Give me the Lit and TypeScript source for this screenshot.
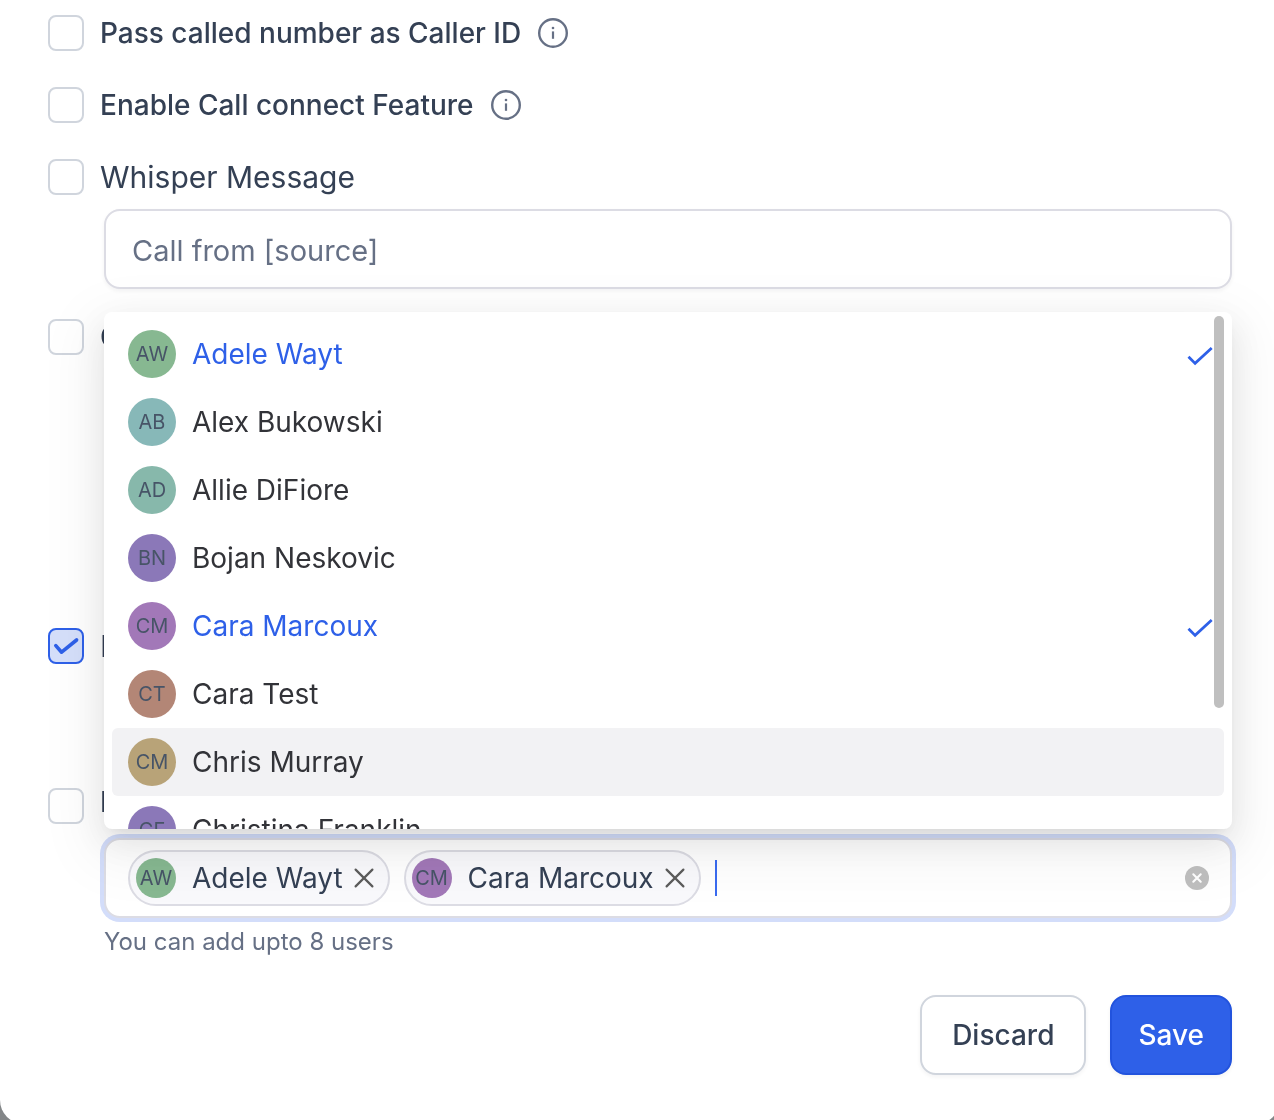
import { LitElement, html, css, svg, nothing } from "lit";
import { customElement, property, state } from "lit/decorators.js";
import { classMap } from "lit/directives/class-map.js";
import { styleMap } from "lit/directives/style-map.js";

interface User {
  id: string;
  name: string;
  initials: string;
  color: string;
}

const USERS: User[] = [
  { id: "adele", name: "Adele Wayt", initials: "AW", color: "#87b891" },
  { id: "alex", name: "Alex Bukowski", initials: "AB", color: "#87b8b8" },
  { id: "allie", name: "Allie DiFiore", initials: "AD", color: "#87b8ab" },
  { id: "bojan", name: "Bojan Neskovic", initials: "BN", color: "#8b78b8" },
  { id: "cara-m", name: "Cara Marcoux", initials: "CM", color: "#a278b8" },
  { id: "cara-t", name: "Cara Test", initials: "CT", color: "#b38676" },
  { id: "chris", name: "Chris Murray", initials: "CM", color: "#b8a378" },
  { id: "christina", name: "Christina Franklin", initials: "CF", color: "#8b78b8" },
];

const infoIcon = svg`<svg class="info" viewBox="0 0 32 32" fill="none" stroke="#667085" aria-hidden="true">
  <circle cx="16" cy="16" r="13.8" stroke-width="2.4"/>
  <path d="M16 14.4v7.4" stroke-width="2.2"/>
  <circle cx="16" cy="11" r="1.3" fill="#667085" stroke="none"/>
</svg>`;

const checkIcon = svg`<svg class="check" viewBox="0 -4 26 24" fill="none" stroke="#2e60e8" stroke-width="2.8" aria-hidden="true">
  <path d="M1.5 10.8l6.6 6.6L24.7 2"/>
</svg>`;

@customElement("check-row")
export class CheckRow extends LitElement {
  @property() label = "";
  @property({ type: Boolean }) checked = false;
  @property({ type: Boolean }) regular = false;
  @property({ type: Boolean }) top = false;
  @property({ type: Boolean }) info = false;

  static styles = css`
    :host {
      display: flex;
      align-items: center;
      height: 36px;
    }
    .row {
      display: flex;
      align-items: center;
      gap: 16px;
      font: 500 28px/36px Inter, "Liberation Sans", sans-serif;
      color: #344054;
      white-space: nowrap;
    }
    .regular {
      font-size: 30px;
      font-weight: 400;
    }
    .top {
      align-items: flex-start;
      line-height: 28px;
    }
    .box {
      display: grid;
      width: 36px;
      height: 36px;
    }
    .box > * {
      grid-area: 1 / 1;
    }
    input {
      appearance: none;
      box-sizing: border-box;
      width: 36px;
      height: 36px;
      margin: 0;
      border: 2px solid #d0d5dd;
      border-radius: 8px;
      background: #ffffff;
    }
    input:checked {
      border-color: #2e60e8;
      background: #d5dffa;
    }
    .mark {
      width: 36px;
      height: 36px;
      pointer-events: none;
    }
    .info-button {
      display: flex;
      margin: 0 0 0 16px;
      padding: 0;
      border: 0;
      background: none;
    }
    .info {
      display: block;
      width: 32px;
      height: 32px;
    }
  `;

  render() {
    return html`
      <label class=${classMap({ row: true, regular: this.regular, top: this.top })}>
        <span class="box">
          <input
            type="checkbox"
            .checked=${this.checked}
            @change=${(e: Event) => (this.checked = (e.target as HTMLInputElement).checked)}
          />
          ${this.checked
            ? svg`<svg class="mark" viewBox="0 0 36 36" fill="none" stroke="#2e60e8" stroke-width="3.6" stroke-linecap="round" stroke-linejoin="round" aria-hidden="true">
                <path d="M7.8 17.6l5.8 6.6L28.6 12"/>
              </svg>`
            : nothing}
        </span>
        <span>${this.label}</span>
      </label>
      ${this.info
        ? html`<button class="info-button" type="button" aria-label="More about ${this.label}">${infoIcon}</button>`
        : nothing}
    `;
  }
}

@customElement("user-avatar")
export class UserAvatar extends LitElement {
  @property() initials = "";
  @property() color = "";
  @property({ type: Boolean, reflect: true }) small = false;

  static styles = css`
    :host {
      display: block;
      flex: none;
    }
    .avatar {
      display: flex;
      align-items: center;
      justify-content: center;
      width: 48px;
      height: 48px;
      border-radius: 50%;
      font: 400 20px/24px Inter, "Liberation Sans", sans-serif;
      color: #475467;
    }
    .small {
      width: 40px;
      height: 40px;
    }
  `;

  render() {
    return html`<span
      class=${classMap({ avatar: true, small: this.small })}
      style=${styleMap({ background: this.color })}
      aria-hidden="true"
      >${this.initials}</span
    >`;
  }
}

@customElement("user-picker")
export class UserPicker extends LitElement {
  @state() private selected = ["adele", "cara-m"];
  @state() private active = "chris";

  static styles = css`
    :host {
      display: block;
      font: 400 28px/36px Inter, "Liberation Sans", sans-serif;
    }
    .picker {
      position: relative;
    }
    .field {
      display: flex;
      align-items: center;
      gap: 14px;
      box-sizing: border-box;
      min-height: 80px;
      padding: 10px 21px 10px 22px;
      border: 2px solid #dcdce4;
      border-radius: 16px;
      background: #ffffff;
      box-shadow: 0 0 0 4px #d3ddfa;
    }
    .chip {
      display: flex;
      align-items: center;
      box-sizing: border-box;
      height: 56px;
      padding: 0 12px 0 6px;
      border: 2px solid #dcdce4;
      border-radius: 28px;
      background: #f9f9fc;
      color: #344054;
      white-space: nowrap;
    }
    .chip-name {
      margin: 0 9px 0 16px;
    }
    .chip button,
    .clear {
      display: flex;
      padding: 0;
      border: 0;
      background: none;
    }
    .chip svg,
    .clear svg {
      display: block;
      width: 24px;
      height: 24px;
    }
    .entry {
      display: flex;
      align-items: center;
      flex: 1;
      min-width: 0;
    }
    .caret {
      width: 2px;
      height: 36px;
      background: #3a6bf0;
    }
    .entry input {
      flex: 1;
      min-width: 0;
      padding: 0;
      border: 0;
      outline: 0;
      background: none;
      font: inherit;
      color: #344054;
      caret-color: transparent;
    }
    .menu {
      position: absolute;
      z-index: 1;
      right: 0;
      bottom: calc(100% + 9px);
      left: 0;
      border-radius: 8px;
      background: #ffffff;
      box-shadow:
        0 12px 32px rgba(0, 0, 0, 0.08),
        0 6px 12px -8px rgba(0, 0, 0, 0.12),
        0 18px 56px 16px rgba(0, 0, 0, 0.05);
    }
    .options {
      box-sizing: border-box;
      max-height: 517px;
      margin: 0;
      padding: 8px;
      overflow-y: auto;
      scrollbar-width: none;
    }
    .option {
      display: flex;
      align-items: center;
      gap: 16px;
      box-sizing: border-box;
      width: 100%;
      height: 68px;
      padding: 0 11px 0 16px;
      border: 0;
      border-radius: 6px;
      background: none;
      font: inherit;
      color: #323338;
      text-align: left;
    }
    .option.active {
      background: #f2f2f4;
    }
    .option.selected {
      color: #2e60e8;
    }
    .option-name {
      flex: 1;
    }
    .check {
      width: 26px;
      height: 24px;
    }
    .thumb {
      position: absolute;
      top: 4px;
      right: 8px;
      width: 10px;
      height: 392px;
      border-radius: 5px;
      background: #bfbfbf;
    }
  `;

  private toggle(id: string) {
    this.selected = this.selected.includes(id)
      ? this.selected.filter((s) => s !== id)
      : [...this.selected, id];
  }

  render() {
    const chosen = USERS.filter((u) => this.selected.includes(u.id));
    return html`
      <div class="picker">
        <div class="field">
          ${chosen.map(
            (u) => html`<span class="chip">
              <user-avatar small .initials=${u.initials} .color=${u.color}></user-avatar>
              <span class="chip-name">${u.name}</span>
              <button type="button" aria-label="Remove ${u.name}" @click=${() => this.toggle(u.id)}>
                <svg viewBox="0 0 24 24" fill="none" stroke="#5c5c5c" stroke-width="2.2" stroke-linecap="round">
                  <path d="M3.6 3.6l16.8 16.8M20.4 3.6L3.6 20.4" />
                </svg>
              </button>
            </span>`
          )}
          <span class="entry">
            <span class="caret"></span>
            <input type="text" role="combobox" aria-label="Add users" aria-expanded="true" />
          </span>
          <button class="clear" type="button" aria-label="Clear all" @click=${() => (this.selected = [])}>
            <svg viewBox="0 0 24 24">
              <circle cx="12" cy="12" r="12" fill="#bfbfbf" />
              <path d="M8.3 8.3l7.4 7.4M15.7 8.3l-7.4 7.4" stroke="#ffffff" stroke-width="2.1" stroke-linecap="round" />
            </svg>
          </button>
        </div>
        <div class="menu">
          <div class="options" role="listbox" aria-label="Users" aria-multiselectable="true">
            ${USERS.map((u) => {
              const on = this.selected.includes(u.id);
              return html`<button
                type="button"
                role="option"
                aria-selected=${on ? "true" : "false"}
                class=${classMap({ option: true, selected: on, active: this.active === u.id })}
                @click=${() => this.toggle(u.id)}
                @mouseenter=${() => (this.active = u.id)}
              >
                <user-avatar .initials=${u.initials} .color=${u.color}></user-avatar>
                <span class="option-name">${u.name}</span>
                ${on ? checkIcon : nothing}
              </button>`;
            })}
          </div>
          <div class="thumb"></div>
        </div>
      </div>
    `;
  }
}

@customElement("app-root")
export class AppRoot extends LitElement {
  static styles = css`
    :host {
      display: block;
      height: 100vh;
      overflow: hidden;
      background: #838688;
      font: 400 28px/36px Inter, "Liberation Sans", sans-serif;
      color: #344054;
    }
    .dialog {
      display: flex;
      flex-direction: column;
      margin-right: -6px;
      padding: 15px 48px 49px;
      border-radius: 0 0 24px 24px;
      background: #ffffff;
      will-change: transform;
    }
    .options {
      display: flex;
      flex-direction: column;
      gap: 36px;
    }
    .groups {
      display: flex;
      flex-direction: column;
      gap: 30px;
    }
    .group {
      display: flex;
      flex-direction: column;
      gap: 14px;
    }
    .body {
      margin-left: 56px;
      min-height: 80px;
    }
    .tall {
      min-height: 229px;
    }
    .text {
      display: block;
      box-sizing: border-box;
      width: 100%;
      height: 80px;
      padding: 2px 26px 0;
      border: 2px solid #dcdce4;
      border-radius: 16px;
      background: #ffffff;
      box-shadow: 0 2px 4px rgba(16, 24, 40, 0.05);
      font: 400 29px/36px Inter, "Liberation Sans", sans-serif;
      color: #344054;
    }
    .text::placeholder {
      color: #667085;
      opacity: 1;
    }
    .hint {
      margin: 8px 0 0;
      font-size: 24px;
      line-height: 32px;
      color: #667085;
    }
    .actions {
      display: flex;
      justify-content: flex-end;
      gap: 24px;
      margin-top: 37px;
    }
    .button {
      box-sizing: border-box;
      height: 80px;
      padding: 0 26px;
      border: 2px solid #2253dd;
      border-radius: 16px;
      background: #2e60e8;
      box-shadow: 0 2px 4px rgba(16, 24, 40, 0.05);
      font: 500 28px/36px Inter, "Liberation Sans", sans-serif;
      color: #ffffff;
    }
    .secondary {
      padding: 0 30px;
      border-color: #d0d5dd;
      background: #ffffff;
      color: #344054;
    }
  `;

  render() {
    return html`
      <form class="dialog" @submit=${(e: Event) => e.preventDefault()}>
        <div class="options">
          <check-row label="Pass called number as Caller ID" info></check-row>
          <check-row label="Enable Call connect Feature" info></check-row>
          <div class="groups">
            <div class="group">
              <check-row label="Whisper Message" regular></check-row>
              <div class="body">
                <input class="text" type="text" aria-label="Whisper Message" placeholder="Call from [source]" />
              </div>
            </div>
            <div class="group">
              <check-row label="Call Recording"></check-row>
              <div class="body tall"></div>
            </div>
            <div class="group">
              <check-row label="Notifications" checked regular></check-row>
              <div class="body"></div>
            </div>
            <div class="group">
              <check-row label="Notify Users" top></check-row>
              <div class="body">
                <user-picker></user-picker>
                <p class="hint">You can add upto 8 users</p>
              </div>
            </div>
          </div>
        </div>
        <div class="actions">
          <button class="button secondary" type="button">Discard</button>
          <button class="button" type="submit">Save</button>
        </div>
      </form>
    `;
  }
}
